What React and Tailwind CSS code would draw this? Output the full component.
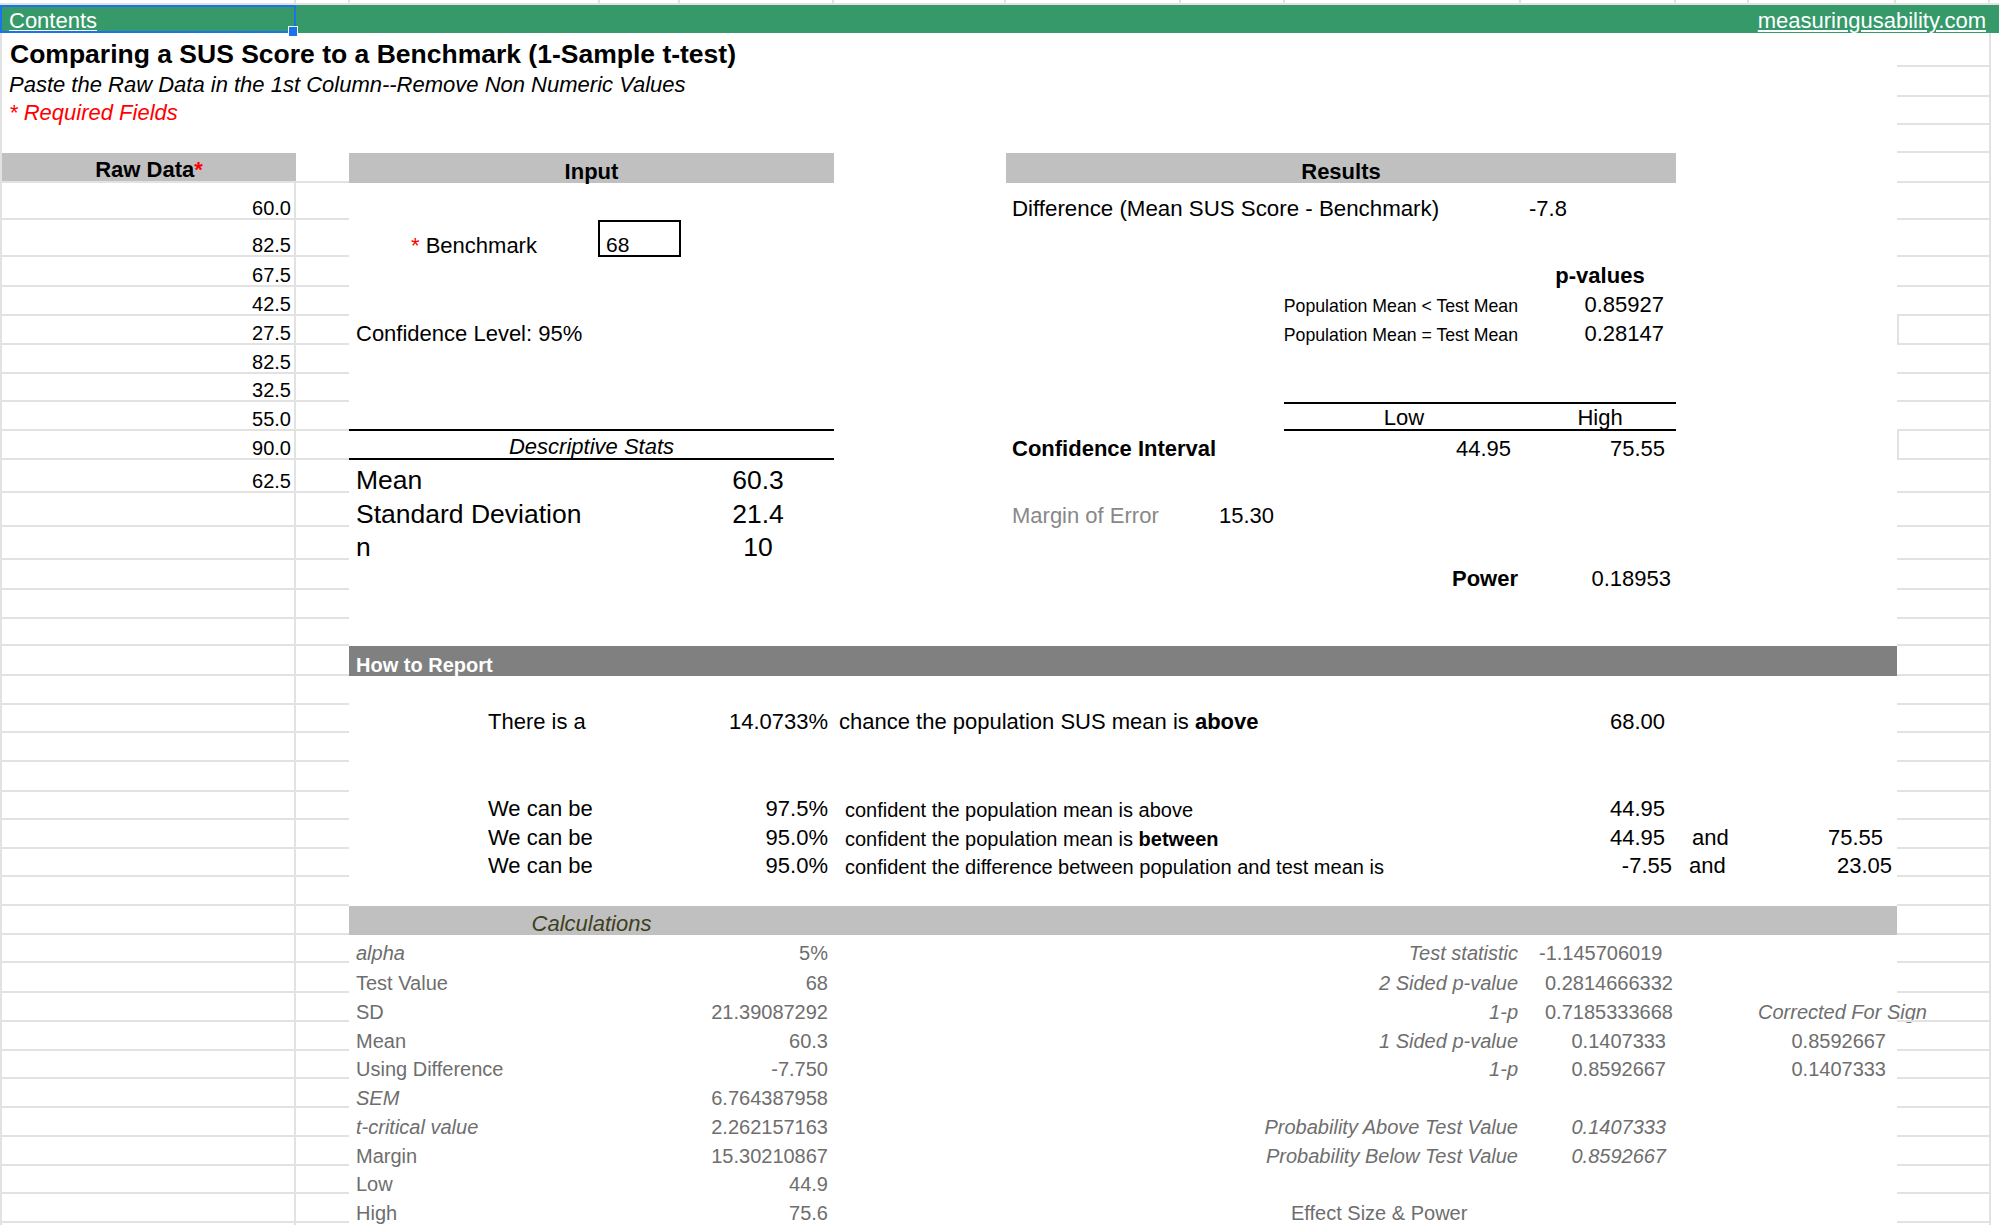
import React from 'react'

// column widths of the strip above the green bar (cut-off sheet row)
const topCols = [
    'w-[296px]', 'w-[54px]', 'w-[250px]', 'w-[80px]', 'w-[154px]', 'w-[172px]', 'w-[175px]',
    'w-[104px]', 'w-[236px]', 'w-[155px]', 'w-[73px]', 'w-[147px]', 'w-[94px]',
]

function Cell({ w, className = '', children }) {
    return (
        <div className={`${w} shrink-0 flex items-end pb-0 leading-none whitespace-nowrap ${className}`}>
            {children}
        </div>
    )
}

function HeadRow({ h, className = '', children }) {
    return (
        <div className={`flex ${h}`}>
            <div className={`w-[1897px] shrink-0 border-l-2 border-[#e2e2e2] leading-none whitespace-nowrap ${className}`}>
                {children}
            </div>
            <div className="w-[94px] shrink-0 border-b-2 border-r-2 border-[#e2e2e2]" />
        </div>
    )
}

function Row({ h, raw, rawHead, boxed, children }) {
    return (
        <div className={`flex ${h}`}>
            {rawHead ? (
                <div className="w-[296px] shrink-0 flex items-end justify-center border-l-2 border-b-2 border-[#e2e2e2] bg-[#c0c0c0] text-[22px] font-bold leading-none">
                    Raw Data<span className="text-[#ff0000]">*</span>
                </div>
            ) : (
                <div className="w-[296px] shrink-0 flex items-end justify-end border-x-2 border-b-2 border-[#e2e2e2] pr-[3px] text-[20px] leading-[19px]">
                    {raw}
                </div>
            )}
            <div className="w-[53px] shrink-0 border-b-2 border-[#e2e2e2]" />
            <div className="w-[1548px] shrink-0 flex text-[22px]">{children}</div>
            <div className={`w-[94px] shrink-0 border-b-2 border-r-2 border-[#e2e2e2] ${boxed ? 'border-l-2' : ''}`} />
        </div>
    )
}

const calcRows = [
    { h: 'h-[28px]', l: 'alpha', li: true, v: '5%', rl: 'Test statistic', rv: '-1.145706019', rvc: 'pl-[15px]' },
    { h: 'h-[30px]', l: 'Test Value', v: '68', rl: '2 Sided p-value', rv: '0.2814666332', rvc: 'pl-[21px]' },
    { h: 'h-[29px]', l: 'SD', v: '21.39087292', rl: '1-p', rv: '0.7185333668', rvc: 'pl-[21px]', x: 'Corrected For Sign', xc: 'pl-[82px] italic' },
    { h: 'h-[29px]', l: 'Mean', v: '60.3', rl: '1 Sided p-value', rv: '0.1407333', rvc: 'justify-end pr-[10px]', x: '0.8592667', xc: 'justify-end pr-[11px]' },
    { h: 'h-[28px]', l: 'Using Difference', v: '-7.750', rl: '1-p', rv: '0.8592667', rvc: 'justify-end pr-[10px]', x: '0.1407333', xc: 'justify-end pr-[11px]' },
    { h: 'h-[29px]', l: 'SEM', li: true, v: '6.764387958' },
    { h: 'h-[29px]', l: 't-critical value', li: true, v: '2.262157163', rl: 'Probability Above Test Value', rv: '0.1407333', rvc: 'justify-end pr-[10px] italic' },
    { h: 'h-[29px]', l: 'Margin', v: '15.30210867', rl: 'Probability Below Test Value', rv: '0.8592667', rvc: 'justify-end pr-[10px] italic' },
    { h: 'h-[28px]', l: 'Low', v: '44.9' },
    { h: 'h-[29px]', l: 'High', v: '75.6', effect: true },
]

function App() {
    return (
        <div className="w-[1999px] min-h-screen bg-white text-black font-['Liberation_Sans',Arial,sans-serif] overflow-hidden">
            {/* cut-off row above */}
            <div className="flex h-[5px] border-b-2 border-[#e2e2e2]">
                {topCols.map((w, i) => (
                    <div key={i} className={`${w} shrink-0 border-r-2 border-[#e2e2e2]`} />
                ))}
            </div>

            {/* green bar */}
            <div className="relative z-10 flex h-[28px] items-end justify-between bg-[#35996a] text-[22px] leading-none text-white">
                <span className="pl-[9px] pb-[1px] underline">Contents</span>
                <span className="pr-[13px] pb-[1px] underline">measuringusability.com</span>
                <div className="pointer-events-none absolute left-0 top-0 h-[28px] w-[296px] border-2 border-[#1a73e8]" />
                <div className="absolute left-[288px] top-[21px] h-[11px] w-[10px] border border-white bg-[#1a73e8]" />
            </div>

            <HeadRow h="h-[34px]" className="pl-[8px] pt-[8px] text-[26.5px] font-bold">
                Comparing a SUS Score to a Benchmark (1-Sample t-test)
            </HeadRow>
            <HeadRow h="h-[30px]" className="pl-[7px] pt-[7px] text-[22px] italic">
                Paste the Raw Data in the 1st Column--Remove Non Numeric Values
            </HeadRow>
            <HeadRow h="h-[28px]" className="pl-[7px] pt-[5px] text-[22px] italic text-[#ff0000]">
                * Required Fields
            </HeadRow>
            <HeadRow h="h-[28px]" />

            <Row h="h-[30px]" rawHead>
                <Cell w="w-[485px]" className="justify-center bg-[#c0c0c0] font-bold">Input</Cell>
                <Cell w="w-[172px]" />
                <Cell w="w-[670px]" className="justify-center bg-[#c0c0c0] font-bold">Results</Cell>
            </Row>

            <Row h="h-[37px]" raw="60.0">
                <Cell w="w-[657px]" />
                <Cell w="w-[518px]" className="pl-[6px] text-[22.3px]">Difference (Mean SUS Score - Benchmark)</Cell>
                <Cell w="w-[152px]" className="pl-[5px]">-7.8</Cell>
            </Row>

            <Row h="h-[37px]" raw="82.5">
                <div className="w-[485px] shrink-0 flex items-end">
                    <div className="w-[249px] shrink-0 pl-[62px] leading-none whitespace-nowrap">
                        <span className="text-[#ff0000]">*</span> Benchmark
                    </div>
                    <div className="w-[83px] h-full shrink-0 flex items-end border-2 border-black px-[6px] text-[21px] leading-none">
                        68
                    </div>
                </div>
            </Row>

            <Row h="h-[30px]" raw="67.5">
                <Cell w="w-[1175px]" />
                <Cell w="w-[152px]" className="justify-center font-bold">p-values</Cell>
            </Row>

            <Row h="h-[29px]" raw="42.5">
                <Cell w="w-[657px]" />
                <Cell w="w-[518px]" className="justify-end pr-[6px] text-[17.7px]">Population Mean &lt; Test Mean</Cell>
                <Cell w="w-[152px]" className="justify-end pr-[12px]">0.85927</Cell>
            </Row>

            <Row h="h-[29px]" raw="27.5" boxed>
                <Cell w="w-[485px]" className="pl-[7px]">Confidence Level: 95%</Cell>
                <Cell w="w-[172px]" />
                <Cell w="w-[518px]" className="justify-end pr-[6px] text-[17.7px]">Population Mean = Test Mean</Cell>
                <Cell w="w-[152px]" className="justify-end pr-[12px]">0.28147</Cell>
            </Row>

            <Row h="h-[29px]" raw="82.5" />
            <Row h="h-[28px]" raw="32.5" />

            <Row h="h-[29px]" raw="55.0">
                <Cell w="w-[485px]" className="border-b-2 border-black" />
                <Cell w="w-[450px]" />
                <Cell w="w-[240px]" className="justify-center border-y-2 border-black">Low</Cell>
                <Cell w="w-[152px]" className="justify-center border-y-2 border-black">High</Cell>
            </Row>

            <Row h="h-[29px]" raw="90.0" boxed>
                <Cell w="w-[485px]" className="justify-center border-b-2 border-black italic">Descriptive Stats</Cell>
                <Cell w="w-[172px]" />
                <Cell w="w-[278px]" className="pl-[6px] font-bold">Confidence Interval</Cell>
                <Cell w="w-[240px]" className="justify-end pr-[13px]">44.95</Cell>
                <Cell w="w-[152px]" className="justify-end pr-[11px]">75.55</Cell>
            </Row>

            <Row h="h-[33px]" raw="62.5">
                <Cell w="w-[359px]" className="pl-[7px] text-[26.5px]">Mean</Cell>
                <Cell w="w-[100px]" className="justify-center text-[26.5px]">60.3</Cell>
            </Row>

            <Row h="h-[34px]">
                <Cell w="w-[359px]" className="pl-[7px] text-[26.5px]">Standard Deviation</Cell>
                <Cell w="w-[100px]" className="justify-center text-[26.5px]">21.4</Cell>
                <Cell w="w-[198px]" />
                <Cell w="w-[213px]" className="pl-[6px] text-[#888888]">Margin of Error</Cell>
                <Cell w="w-[100px]">15.30</Cell>
            </Row>

            <Row h="h-[33px]">
                <Cell w="w-[359px]" className="pl-[7px] text-[26.5px]">n</Cell>
                <Cell w="w-[100px]" className="justify-center text-[26.5px]">10</Cell>
            </Row>

            <Row h="h-[30px]">
                <Cell w="w-[657px]" />
                <Cell w="w-[518px]" className="justify-end pr-[6px] font-bold">Power</Cell>
                <Cell w="w-[152px]" className="justify-end pr-[5px]">0.18953</Cell>
            </Row>

            <Row h="h-[29px]" />
            <Row h="h-[27px]" />

            <Row h="h-[30px]">
                <Cell w="w-[1548px]" className="bg-[#808080] pl-[7px] pb-[1px] text-[20px] font-bold text-white">How to Report</Cell>
            </Row>

            <Row h="h-[29px]" />

            <Row h="h-[28px]">
                <Cell w="w-[485px]" className="justify-between pl-[139px] pr-[6px]">
                    <span>There is a</span>
                    <span>14.0733%</span>
                </Cell>
                <Cell w="w-[690px]" className="pl-[5px]">
                    chance the population SUS mean is&nbsp;<b>above</b>
                </Cell>
                <Cell w="w-[152px]" className="justify-end pr-[11px]">68.00</Cell>
            </Row>

            <Row h="h-[29px]" />
            <Row h="h-[30px]" />

            <Row h="h-[28px]">
                <Cell w="w-[485px]" className="justify-between pl-[139px] pr-[6px]">
                    <span>We can be</span>
                    <span>97.5%</span>
                </Cell>
                <Cell w="w-[690px]" className="pl-[11px] text-[20px]">confident the population mean is above</Cell>
                <Cell w="w-[152px]" className="justify-end pr-[11px]">44.95</Cell>
            </Row>

            <Row h="h-[29px]">
                <Cell w="w-[485px]" className="justify-between pl-[139px] pr-[6px]">
                    <span>We can be</span>
                    <span>95.0%</span>
                </Cell>
                <Cell w="w-[690px]" className="pl-[11px] text-[20px]">
                    confident the population mean is&nbsp;<b>between</b>
                </Cell>
                <Cell w="w-[152px]" className="justify-end pr-[11px]">44.95</Cell>
                <Cell w="w-[221px]" className="justify-between pl-[16px] pr-[14px]">
                    <span>and</span>
                    <span>75.55</span>
                </Cell>
            </Row>

            <Row h="h-[28px]">
                <Cell w="w-[485px]" className="justify-between pl-[139px] pr-[6px]">
                    <span>We can be</span>
                    <span>95.0%</span>
                </Cell>
                <Cell w="w-[690px]" className="pl-[11px] text-[20px]">
                    confident the difference between population and test mean is
                </Cell>
                <Cell w="w-[152px]" className="justify-end pr-[4px]">-7.55</Cell>
                <Cell w="w-[221px]" className="justify-between pl-[13px] pr-[5px]">
                    <span>and</span>
                    <span>23.05</span>
                </Cell>
            </Row>

            <Row h="h-[29px]" />

            <Row h="h-[29px]">
                <div className="w-[1548px] shrink-0 flex bg-[#c0c0c0]">
                    <Cell w="w-[485px]" className="justify-center italic text-[#3f3f1f]">Calculations</Cell>
                </div>
            </Row>

            {calcRows.map((r) => (
                <Row key={r.l} h={r.h}>
                    <Cell w="w-[485px]" className="justify-between pl-[7px] pr-[6px] text-[20px] text-[#6e6e6e]">
                        <span className={r.li ? 'italic' : ''}>{r.l}</span>
                        <span>{r.v}</span>
                    </Cell>
                    {r.effect ? (
                        <Cell w="w-[690px]" className="pl-[457px] text-[20px] text-[#6e6e6e]">Effect Size &amp; Power</Cell>
                    ) : (
                        <Cell w="w-[690px]" className="justify-end pr-[6px] text-[20px] italic text-[#6e6e6e]">{r.rl}</Cell>
                    )}
                    <Cell w="w-[152px]" className={`text-[20px] text-[#6e6e6e] ${r.rvc || ''}`}>{r.rv}</Cell>
                    <Cell w="w-[221px]" className={`text-[20px] text-[#6e6e6e] ${r.xc || ''}`}>{r.x}</Cell>
                </Row>
            ))}

            <Row h="h-[12px]" />
        </div>
    )
}

export default App
